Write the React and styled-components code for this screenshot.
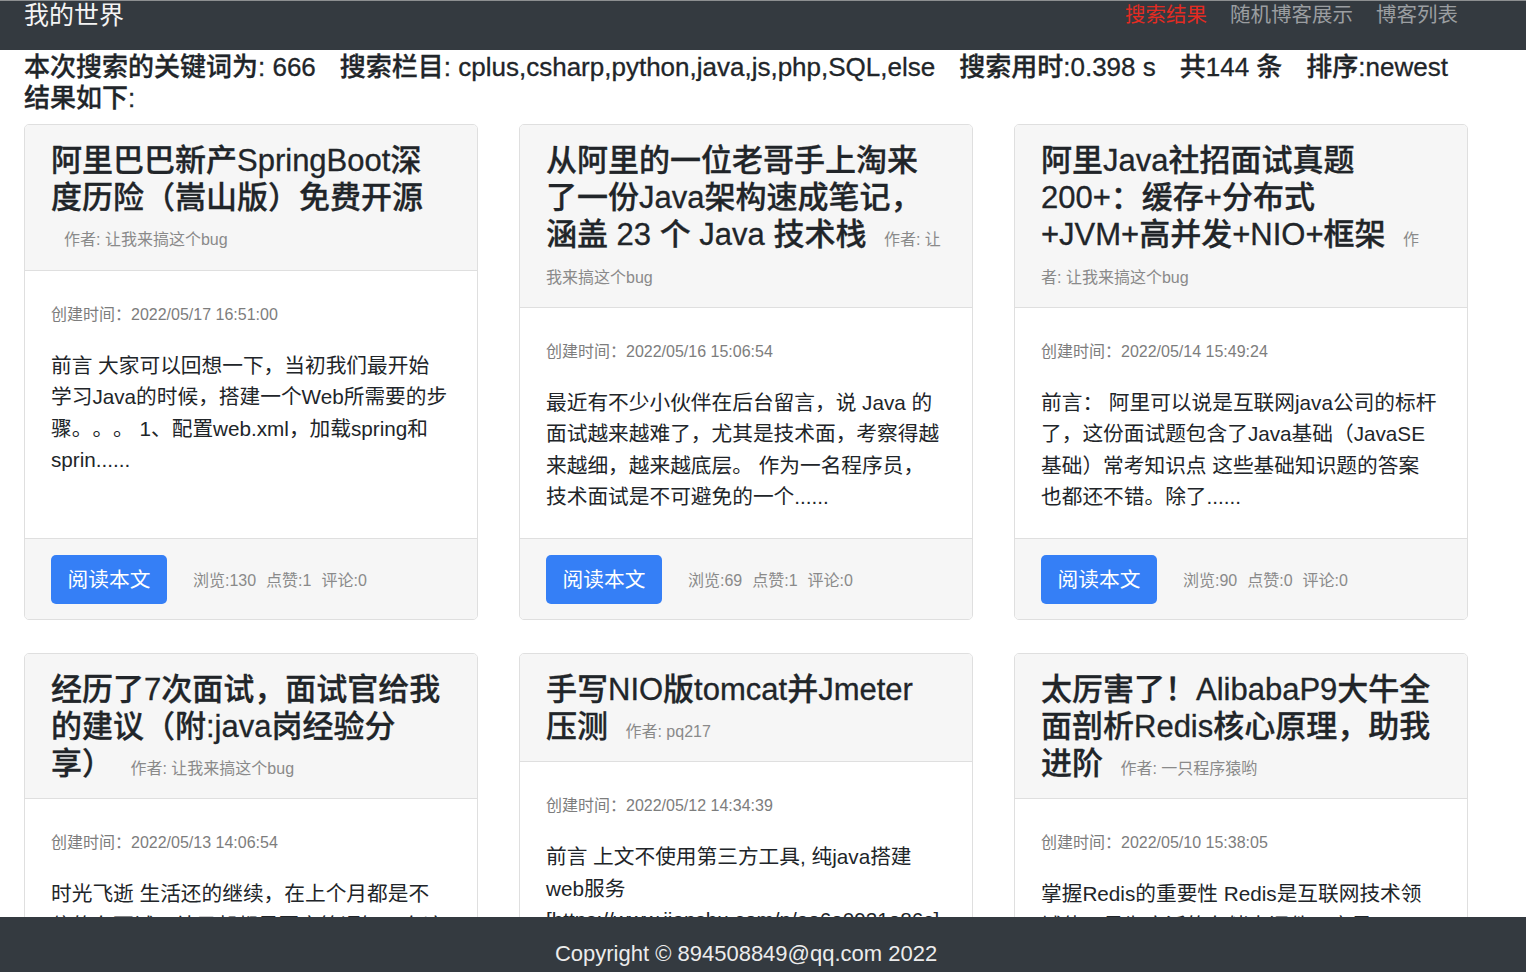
import React from "react";
import styled, { createGlobalStyle } from "styled-components";

const FONT = `"Liberation Sans", "Noto Sans CJK SC", sans-serif`;

const Global = createGlobalStyle`
  html, body { margin: 0; padding: 0; background: #fff; }
  body {
    font-family: ${FONT};
    color: #212529;
    text-spacing-trim: space-all;
  }
  * { box-sizing: border-box; }
`;

const Nav = styled.nav`
  height: 50px;
  background: #343a40;
  border-top: 1px solid #8d8f91;
  display: flex;
  align-items: flex-start;
  justify-content: space-between;
  padding: 0 68px 0 24px;
`;

const Brand = styled.div`
  font-size: 25px;
  line-height: 28px;
  color: #f4f4f4;
`;

const NavLinks = styled.div`
  display: flex;
  gap: 23px;
  padding-top: 1px;
`;

const NavLink = styled.a`
  font-size: 20.5px;
  line-height: 26px;
  color: ${(p) => (p.$active ? "#e32b22" : "#9b9ea1")};
  text-decoration: none;
`;

const Main = styled.main`
  padding: 2px 58px 120px 24px;
`;

const Info = styled.div`
  font-size: 26px;
  line-height: 31px;
  font-weight: 500;
  color: #212529;
  -webkit-text-stroke: 0.3px #212529;
  display: flex;
  flex-wrap: wrap;
  column-gap: 24px;
`;

const InfoLine = styled.div`
  width: 100%;
`;

const Grid = styled.div`
  margin-top: 10px;
  display: grid;
  grid-template-columns: repeat(3, 454px);
  column-gap: 41px;
  row-gap: 33px;
`;

const Card = styled.div`
  display: flex;
  flex-direction: column;
  border: 1px solid #dfdfdf;
  border-radius: 5px;
  overflow: hidden;
  background: #fff;
`;

const CardHeader = styled.div`
  background: #f6f6f6;
  border-bottom: 1px solid #dfdfdf;
  padding: 17px 30px 16px 26px;
`;

const Title = styled.h2`
  margin: 0;
  font-size: 31px;
  line-height: 1.2;
  font-weight: 500;
  color: #212529;
`;

const TitleText = styled.span`
  -webkit-text-stroke: 0.3px #212529;
`;

const Gap = styled.span`
  font-size: 16px;
`;

const Author = styled.small`
  margin-left: 13px;
  font-size: 16px;
  font-weight: 400;
  color: #8a8a8a;
`;

const CardBody = styled.div`
  flex: 1;
  padding: 32px 28.5px 25px 26px;
`;

const DateLine = styled.div`
  font-size: 16px;
  line-height: 24px;
  color: #7d7d7d;
`;

const Desc = styled.p`
  margin: 23px 0 0 0;
  font-size: 20.7px;
  line-height: 31.5px;
  color: #212529;
`;

const CardFooter = styled.div`
  background: #f6f6f6;
  border-top: 1px solid #dfdfdf;
  padding: 16px 27px 15px 26px;
  display: flex;
  align-items: center;
  gap: 26px;
`;

const ReadButton = styled.button`
  font-family: ${FONT};
  background: #357ff6;
  color: #fff;
  border: none;
  border-radius: 5px;
  font-size: 20.7px;
  line-height: 31px;
  padding: 9px 16.6px;
  cursor: pointer;
`;

const Stats = styled.div`
  display: flex;
  gap: 10px;
  font-size: 16px;
  color: #8a8a8a;
`;

const Footer = styled.footer`
  position: fixed;
  left: 0;
  right: 0;
  bottom: 0;
  height: 55px;
  background: #343a40;
  color: #ececec;
  font-size: 22px;
  line-height: 28px;
  text-align: center;
  padding: 23px 34px 0 0;
`;

const posts = [
  {
    title: "阿里巴巴新产SpringBoot深度历险（嵩山版）免费开源",
    author: "让我来搞这个bug",
    date: "2022/05/17 16:51:00",
    desc: "前言 大家可以回想一下，当初我们最开始学习Java的时候，搭建一个Web所需要的步骤。。。 1、配置web.xml，加载spring和sprin......",
    views: 130, likes: 1, comments: 0,
  },
  {
    title: "从阿里的一位老哥手上淘来了一份Java架构速成笔记，涵盖 23 个 Java 技术栈",
    author: "让我来搞这个bug",
    date: "2022/05/16 15:06:54",
    desc: "最近有不少小伙伴在后台留言，说 Java 的面试越来越难了，尤其是技术面，考察得越来越细，越来越底层。 作为一名程序员，技术面试是不可避免的一个......",
    views: 69, likes: 1, comments: 0,
  },
  {
    title: "阿里Java社招面试真题200+：缓存+分布式+JVM+高并发+NIO+框架",
    author: "让我来搞这个bug",
    date: "2022/05/14 15:49:24",
    desc: "前言： 阿里可以说是互联网java公司的标杆了，这份面试题包含了Java基础（JavaSE基础）常考知识点 这些基础知识题的答案也都还不错。除了......",
    views: 90, likes: 0, comments: 0,
  },
  {
    title: "经历了7次面试，面试官给我的建议（附:java岗经验分享）",
    author: "让我来搞这个bug",
    date: "2022/05/13 14:06:54",
    desc: "时光飞逝 生活还的继续，在上个月都是不停的在面试，结果却都是回家等通知，在这里给大家分享一下我的面试经验......",
    views: 58, likes: 0, comments: 0,
  },
  {
    title: "手写NIO版tomcat并Jmeter压测",
    author: "pq217",
    date: "2022/05/12 14:34:39",
    desc: "前言 上文不使用第三方工具, 纯java搭建web服务[https://www.jianshu.com/p/ae6e0921e86c]......",
    views: 41, likes: 0, comments: 0,
  },
  {
    title: "太厉害了！AlibabaP9大牛全面剖析Redis核心原理，助我进阶",
    author: "一只程序猿哟",
    date: "2022/05/10 15:38:05",
    desc: "掌握Redis的重要性 Redis是互联网技术领域使用最为广泛的存储中间件，它是「Remote Dictionary Service」的首字母缩写......",
    views: 37, likes: 0, comments: 0,
  },
];

function PostCard({ post }) {
  return (
    <Card>
      <CardHeader>
        <Title>
          <TitleText>{post.title}</TitleText>
          <Gap> </Gap>
          <Author>作者: {post.author}</Author>
        </Title>
      </CardHeader>
      <CardBody>
        <DateLine>创建时间：{post.date}</DateLine>
        <Desc>{post.desc}</Desc>
      </CardBody>
      <CardFooter>
        <ReadButton>阅读本文</ReadButton>
        <Stats>
          <span>浏览:{post.views}</span>
          <span>点赞:{post.likes}</span>
          <span>评论:{post.comments}</span>
        </Stats>
      </CardFooter>
    </Card>
  );
}

export default function App() {
  return (
    <>
      <Global />
      <Nav>
        <Brand>我的世界</Brand>
        <NavLinks>
          <NavLink $active>搜索结果</NavLink>
          <NavLink>随机博客展示</NavLink>
          <NavLink>博客列表</NavLink>
        </NavLinks>
      </Nav>
      <Main>
        <Info>
          <span>本次搜索的关键词为: 666</span>
          <span>搜索栏目: cplus,csharp,python,java,js,php,SQL,else</span>
          <span>搜索用时:0.398 s</span>
          <span>共144 条</span>
          <span>排序:newest</span>
          <InfoLine>结果如下:</InfoLine>
        </Info>
        <Grid>
          {posts.map((p, i) => (
            <PostCard key={i} post={p} />
          ))}
        </Grid>
      </Main>
      <Footer>Copyright © 894508849@qq.com 2022</Footer>
    </>
  );
}
